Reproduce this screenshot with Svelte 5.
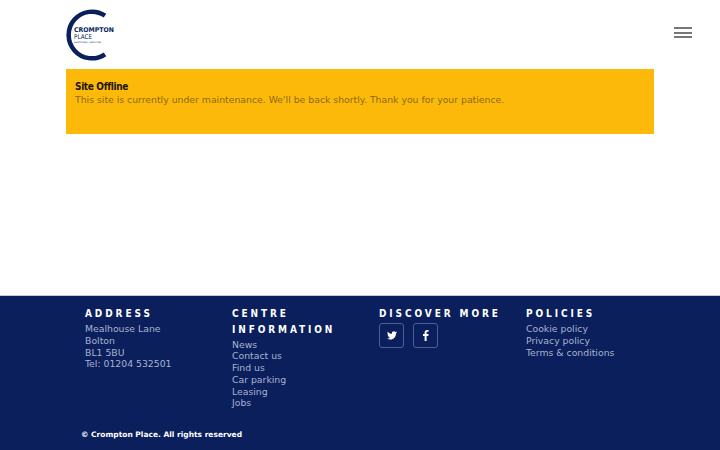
<script>
    const address = ["Mealhouse Lane", "Bolton", "BL1 5BU", "Tel: 01204 532501"];
    const centre = ["News", "Contact us", "Find us", "Car parking", "Leasing", "Jobs"];
    const policies = ["Cookie policy", "Privacy policy", "Terms & conditions"];
</script>

<div class="page">
    <header>
        <svg class="logo" width="52" height="54" viewBox="0 0 52 54">
            <path d="M40 7.700 A23.300 23.300 0 1 0 40 46.300" fill="none" stroke="#0a1f5c" stroke-width="4.500" />
            <text x="9" y="24" class="l1" textLength="40" lengthAdjust="spacingAndGlyphs">CROMPTON</text>
            <text x="9" y="31" class="l2" textLength="18" lengthAdjust="spacingAndGlyphs">PLACE</text>
            <text x="9" y="34.800" class="l3" textLength="27" lengthAdjust="spacingAndGlyphs">SHOPPING | BOLTON</text>
        </svg>
        <div class="burger"><span></span><span></span><span></span></div>
    </header>

    <section class="notice">
        <h4>Site Offline</h4>
        <p>This site is currently under maintenance. We'll be back shortly. Thank you for your patience.</p>
    </section>

    <footer>
        <div class="cols">
            <div class="col">
                <h5>ADDRESS</h5>
                <ul>
                    {#each address as line}<li>{line}</li>{/each}
                </ul>
            </div>
            <div class="col">
                <h5>CENTRE INFORMATION</h5>
                <ul>
                    {#each centre as line}<li>{line}</li>{/each}
                </ul>
            </div>
            <div class="col">
                <h5>DISCOVER MORE</h5>
                <div class="social">
                    <a href="#top" aria-label="Twitter">
                        <svg width="10" height="9" viewBox="0 0 24 20">
                            <path fill="#fff" d="M24 2.400c-.9.4-1.800.7-2.800.8 1-.6 1.800-1.600 2.200-2.700-1 .6-2 1-3.100 1.200C19.300.7 18 0 16.600 0c-2.700 0-4.900 2.200-4.900 4.900 0 .4 0 .8.100 1.100C7.700 5.800 4.100 3.900 1.700.9c-.4.700-.7 1.600-.7 2.500 0 1.700.9 3.200 2.200 4.100-.8 0-1.600-.2-2.200-.6v.1c0 2.400 1.700 4.400 3.900 4.800-.4.100-.8.200-1.300.2-.3 0-.6 0-.9-.1.6 2 2.400 3.400 4.600 3.400-1.700 1.300-3.800 2.100-6.100 2.100-.4 0-.8 0-1.200-.1 2.200 1.400 4.800 2.200 7.500 2.200 9.100 0 14-7.500 14-14v-.6c1-.7 1.800-1.600 2.500-2.100z" />
                        </svg>
                    </a>
                    <a href="#top" aria-label="Facebook">
                        <svg width="6" height="11" viewBox="0 0 12 22">
                            <path fill="#fff" d="M11.200.2v3.500H9.100c-1.600 0-1.900.8-1.900 1.900v2.300h3.900l-.5 3.900H7.200V22H3.200V11.800H0V7.900h3.200V5C3.200 1.700 5.200 0 8.100 0c1.400 0 2.600.1 3.100.2z" />
                        </svg>
                    </a>
                </div>
            </div>
            <div class="col">
                <h5>POLICIES</h5>
                <ul>
                    {#each policies as line}<li>{line}</li>{/each}
                </ul>
            </div>
        </div>
        <p class="copy">© Crompton Place. All rights reserved</p>
    </footer>
</div>

<style>
    :global(body) {
        margin: 0;
        font-family: "DejaVu Sans", sans-serif;
        background: #fff;
    }

    .page {
        height: 450px;
        display: flex;
        flex-direction: column;
        overflow: hidden;
    }

    header {
        height: 69px;
        padding: 8px 28px 0 65px;
        box-sizing: border-box;
        display: flex;
        justify-content: space-between;
        align-items: flex-start;
    }

    .logo text {
        font-family: "DejaVu Sans", sans-serif;
        fill: #0a1f5c;
    }

    .l1 {
        font-size: 6.500px;
        font-weight: 700;
    }

    .l2 {
        font-size: 6.500px;
    }

    .l3 {
        font-size: 2.200px;
    }

    .burger {
        width: 18px;
        margin-top: 19px;
        display: flex;
        flex-direction: column;
        gap: 2.700px;
    }

    .burger span {
        height: 2px;
        background: #777;
    }

    .notice {
        margin: 0 66px;
        height: 65px;
        padding: 10.500px 9px 0;
        box-sizing: border-box;
        background: #fdb909;
    }

    .notice h4 {
        margin: 0;
        font-size: 10px;
        font-stretch: condensed;
        line-height: 14px;
        letter-spacing: -0.35px;
        color: #1c1408;
    }

    .notice p {
        margin: -1px 0 0;
        font-size: 9.300px;
        line-height: 14px;
        color: #8a6a10;
    }

    footer {
        margin-top: 161px;
        flex: 1;
        background: #0a1f5c;
        border-top: 1px solid #c8c8d0;
        padding: 10px 66px 0;
    }

    .cols {
        height: 112px;
        display: grid;
        grid-template-columns: repeat(4, 147px);
        padding-left: 19px;
    }

    .col h5 {
        margin: 0 0 1.500px;
        font-size: 10px;
        font-stretch: condensed;
        line-height: 15.500px;
        letter-spacing: 2.900px;
        color: #fff;
    }

    ul {
        list-style: none;
        margin: 0;
        padding: 0;
        font-size: 9.300px;
        line-height: 11.800px;
        color: #a9b3d0;
    }

    .social {
        display: flex;
        gap: 9px;
        margin-top: 1.500px;
    }

    .social a {
        width: 25px;
        height: 25px;
        box-sizing: border-box;
        border: 1px solid #4f5f94;
        border-radius: 3px;
        display: flex;
        align-items: center;
        justify-content: center;
    }

    .copy {
        margin: 11.500px 0 0 15px;
        font-size: 7.500px;
        font-weight: 700;
        color: #fff;
    }
</style>
